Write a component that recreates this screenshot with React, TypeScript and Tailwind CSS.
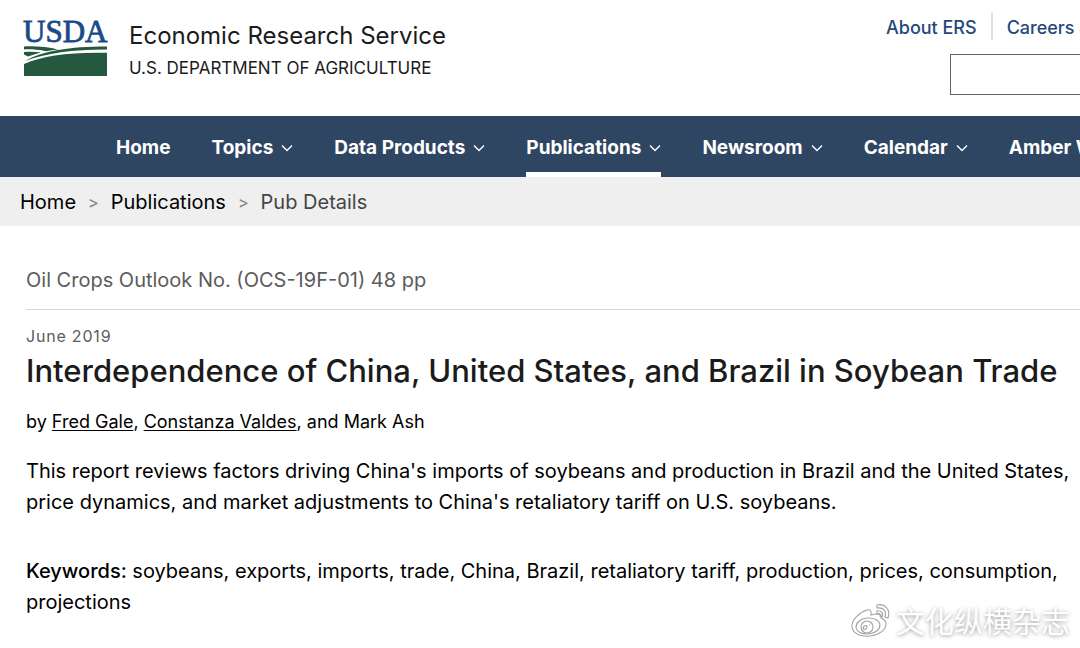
const navItems = [
  { label: "Home", menu: false },
  { label: "Topics", menu: true },
  { label: "Data Products", menu: true },
  { label: "Publications", menu: true, active: true },
  { label: "Newsroom", menu: true },
  { label: "Calendar", menu: true },
  { label: "Amber Waves", menu: true },
];

function Logo() {
  return (
    <svg width="84" height="60" viewBox="0 0 84 60" className="shrink-0 overflow-visible" role="img" aria-label="USDA">
      <text
        x="-1"
        y="26"
        fontSize="31"
        fill="#1b4a8a"
        stroke="#1b4a8a"
        strokeWidth="0.8"
        className="font-['Liberation_Serif',serif]"
      >
        USDA
      </text>
      <g fill="#25593f">
        <path d="M0 30.5C12 30 24 31 34 33.4C30 33.8 26 34.4 22 35.2C15 33.8 8 33.2 0 33.4Z" />
        <path d="M0 36C6 35.4 12 35.6 17 36.6C12 38 8 39.2 4 40.6L0 38.6Z" />
        <path d="M1 45C18 35 45 30.5 83 30.5V33.5C50 33.4 22 37 1 45Z" />
        <path d="M0 48C20 39.5 45 36 83 36.8V60H0Z" />
      </g>
    </svg>
  );
}

function Chevron() {
  return (
    <svg width="12" height="8" viewBox="0 0 12 8" fill="none" stroke="currentColor" strokeWidth="1.4" aria-hidden="true">
      <path d="M1 1.5L6 6.5L11 1.5" />
    </svg>
  );
}

function Header() {
  return (
    <header className="flex h-[116px] justify-between overflow-hidden pl-6">
      <div className="flex gap-[21px] pt-4">
        <Logo />
        <div className="whitespace-nowrap pt-1 text-[#1b1b1b]">
          <div className="text-2xl leading-8">Economic Research Service</div>
          <div className="text-[17px] leading-8">U.S. DEPARTMENT OF AGRICULTURE</div>
        </div>
      </div>

      <div className="w-[194px] shrink-0 pt-3">
        <div className="flex whitespace-nowrap text-lg font-medium text-[#24497a]">
          <a href="#about" className="border-r-2 border-[#dfe1e2] pt-1 pr-3.5 leading-6">
            About ERS
          </a>
          <a href="#careers" className="pt-1 pl-3.5 leading-6">
            Careers at ERS
          </a>
        </div>
        <div className="pt-3.5 pl-16">
          <input
            type="search"
            aria-label="Search"
            className="h-[41px] w-80 border border-[#5f6469] bg-white px-2"
          />
        </div>
      </div>
    </header>
  );
}

function Nav() {
  return (
    <nav className="overflow-hidden bg-[#2f4662] pl-[116px]">
      <div className="flex gap-[41px] whitespace-nowrap">
        {navItems.map((item) => (
          <button
            key={item.label}
            className={`flex h-[61px] shrink-0 items-center gap-2 border-b-[5px] pt-2 text-[19px] font-bold text-white ${
              item.active ? "border-white" : "border-transparent"
            }`}
          >
            {item.label}
            {item.menu && <Chevron />}
          </button>
        ))}
      </div>
    </nav>
  );
}

function Breadcrumb() {
  return (
    <div className="flex h-[49px] items-center gap-3 bg-[#efefef] px-5 text-xl text-black">
      <a href="#home">Home</a>
      <span className="text-base font-medium text-[#8a8a8a]">&gt;</span>
      <a href="#publications">Publications</a>
      <span className="text-base font-medium text-[#8a8a8a]">&gt;</span>
      <span className="text-[#454545]">Pub Details</span>
    </div>
  );
}

function Watermark() {
  return (
    <div className="absolute right-2.5 bottom-2 flex items-center gap-1 text-white">
      <svg width="42" height="36" viewBox="0 0 42 36" fill="none" stroke="#a3a3a3" strokeWidth="1.1">
        <path d="M17 8C10 10 1 18 2 25C3 32 11 35 20 34C29 33 36 28 36 22C36 19 34 17 31 16C32 12 28 11 21 13C22 9 20 7 17 8Z" />
        <ellipse cx="18" cy="24" rx="12" ry="8" transform="rotate(-6 18 24)" />
        <circle cx="17" cy="25" r="6" />
        <path d="M13 27C13 24 15 23 17 24C17 27 15 28 13 27ZM19 23H20" />
        <path d="M27 3C35 1 41 8 38 16L35 15C37 9 33 5 27 6ZM27 9C31 8 34 11 32 15L30 14C31 12 30 11 27 12Z" />
      </svg>
      <span className="font-['Noto_Sans_CJK_SC',sans-serif] text-[29px] leading-10 [text-shadow:0_1px_4px_rgba(0,0,0,0.4)]">
        文化纵横杂志
      </span>
    </div>
  );
}

export default function App() {
  return (
    <div className="relative min-h-screen overflow-hidden bg-white font-['Inter',sans-serif]">
      <Header />
      <Nav />
      <Breadcrumb />

      <main className="pt-9 pl-[26px] text-black">
        <p className="border-b border-[#d6d7d9] pb-[11px] text-xl leading-9 text-[#5c5c5c]">
          Oil Crops Outlook No. (OCS-19F-01) 48 pp
        </p>
        <p className="pt-3.5 text-base leading-6 tracking-wider text-[#5c5c5c]">June 2019</p>
        <h1 className="whitespace-nowrap text-[31px] font-medium leading-[46px] text-[#1b1b1b]">
          Interdependence of China, United States, and Brazil in Soybean Trade
        </h1>
        <p className="pt-3 text-lg leading-8">
          by{" "}
          <a href="#gale" className="underline underline-offset-2">
            Fred Gale
          </a>
          ,{" "}
          <a href="#valdes" className="underline underline-offset-2">
            Constanza Valdes
          </a>
          , and Mark Ash
        </p>
        <p className="pt-[18px] text-xl leading-[31px]">
          This report reviews factors driving China's imports of soybeans and production in Brazil and the United States,
          price dynamics, and market adjustments to China's retaliatory tariff on U.S. soybeans.
        </p>
        <p className="pt-[38px] text-xl leading-[31px]">
          <span className="font-medium">Keywords:</span> soybeans, exports, imports, trade, China, Brazil, retaliatory
          tariff, production, prices, consumption, projections
        </p>
      </main>

      <Watermark />
    </div>
  );
}
